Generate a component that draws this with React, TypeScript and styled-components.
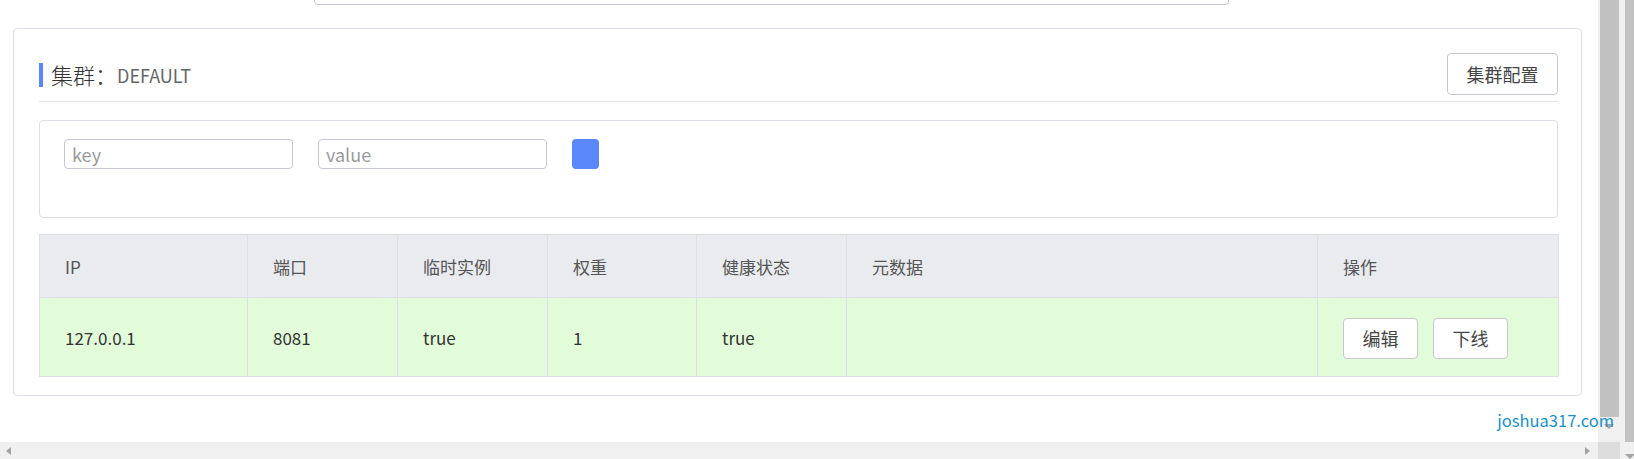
import React from "react";
import styled, { createGlobalStyle } from "styled-components";

const GlobalStyle = createGlobalStyle`
  html, body {
    margin: 0;
    padding: 0;
    background: #ffffff;
    overflow: hidden;
  }
  body {
    font-family: "Noto Sans CJK SC", "Noto Sans", sans-serif;
    color: #333;
  }
`;

type Column = { title: string; width: number };

const COLUMNS: Column[] = [
  { title: "IP", width: 208 },
  { title: "端口", width: 150 },
  { title: "临时实例", width: 150 },
  { title: "权重", width: 149 },
  { title: "健康状态", width: 150 },
  { title: "元数据", width: 471 },
  { title: "操作", width: 241 },
];

const ROWS = [{ ip: "127.0.0.1", port: "8081", ephemeral: "true", weight: "1", healthy: "true", metadata: "" }];

// 页面主体 + 模拟滚动条
export default function App() {
  return (
    <>
      <GlobalStyle />
      <Page>
        <MainColumn>
          <Content>
            <TopSearch />
            <ClusterCard>
              <CardHeader>
                <TitleWrap>
                  <TitleMark />
                  <Title>集群：</Title>
                  <ClusterName>DEFAULT</ClusterName>
                </TitleWrap>
                <Button size="large">集群配置</Button>
              </CardHeader>
              <FilterBox>
                <FilterInput placeholder="key" />
                <FilterInput placeholder="value" />
                <SearchButton />
              </FilterBox>
              <Table>
                <colgroup>
                  {COLUMNS.map((c) => (
                    <col key={c.title} style={{ width: c.width }} />
                  ))}
                </colgroup>
                <thead>
                  <tr>
                    {COLUMNS.map((c) => (
                      <Th key={c.title}>{c.title}</Th>
                    ))}
                  </tr>
                </thead>
                <tbody>
                  {ROWS.map((r) => (
                    <tr key={r.ip}>
                      <Td>{r.ip}</Td>
                      <Td>{r.port}</Td>
                      <Td>{r.ephemeral}</Td>
                      <Td>{r.weight}</Td>
                      <Td>{r.healthy}</Td>
                      <Td>{r.metadata}</Td>
                      <Td>
                        <Actions>
                          <Button size="small">编辑</Button>
                          <Button size="small">下线</Button>
                        </Actions>
                      </Td>
                    </tr>
                  ))}
                </tbody>
              </Table>
            </ClusterCard>
          </Content>
          <HScrollbar>
            <Arrow dir="left" />
            <Arrow dir="right" />
          </HScrollbar>
        </MainColumn>
        <VScrollbar>
          <VTrack>
            <Thumb />
            <Arrow dir="down" />
          </VTrack>
          <Corner />
        </VScrollbar>
        <ScrollGap />
        <OuterScrollbar>
          <OuterThumb />
          <OuterBottom>
            <Arrow dir="down" />
          </OuterBottom>
        </OuterScrollbar>
        <Watermark>joshua317.com</Watermark>
      </Page>
    </>
  );
}

const Page = styled.div`
  position: relative;
  display: flex;
  width: 1634px;
  height: 459px;
  overflow: hidden;
`;

const MainColumn = styled.div`
  flex: 1;
  display: flex;
  flex-direction: column;
  min-width: 0;
`;

const Content = styled.div`
  flex: 1;
  overflow: hidden;
`;

const TopSearch = styled.div`
  width: 915px;
  height: 30px;
  margin: -25px 0 0 314px;
  border: 1px solid #c8c6d2;
  border-radius: 4px;
  box-sizing: border-box;
`;

const ClusterCard = styled.div`
  margin: 23px 0 0 13px;
  width: 1569px;
  height: 368px;
  box-sizing: border-box;
  border: 1px solid #dcdfe6;
  border-radius: 4px;
  padding: 24px 23px 0 25px;
`;

const CardHeader = styled.div`
  display: flex;
  align-items: center;
  justify-content: space-between;
  padding-bottom: 6px;
  border-bottom: 1px solid #e4e7ed;
`;

const TitleWrap = styled.div`
  display: flex;
  align-items: center;
`;

const TitleMark = styled.div`
  width: 4px;
  height: 24px;
  margin-top: 1px;
  background: #5a87fb;
  margin-right: 8px;
`;

const Title = styled.span`
  font-size: 22px;
  font-weight: 300;
  color: #333;
  line-height: 28px;
`;

const ClusterName = styled.span`
  font-size: 18px;
  color: #666;
  line-height: 28px;
  margin-top: 2px;
`;

const Button = styled.button<{ size: "large" | "small" }>`
  font-family: "Noto Sans CJK SC", "Noto Sans", sans-serif;
  font-size: 18px;
  color: #444;
  background: #fff;
  border: 1px solid #c8c6d0;
  border-radius: 4px;
  padding: 0;
  width: ${(p) => (p.size === "large" ? "111px" : "75px")};
  height: ${(p) => (p.size === "large" ? "42px" : "41px")};
  cursor: pointer;
`;

const FilterBox = styled.div`
  margin-top: 18px;
  height: 98px;
  box-sizing: border-box;
  border: 1px solid #dcdfe6;
  border-radius: 4px;
  padding: 18px 24px 0 24px;
  display: flex;
  align-items: flex-start;
  gap: 25px;
`;

const FilterInput = styled.input`
  width: 229px;
  height: 30px;
  box-sizing: border-box;
  border: 1px solid #c8c6d2;
  border-radius: 4px;
  padding: 0 7px;
  font-family: "Noto Sans CJK SC", "Noto Sans", sans-serif;
  font-size: 18px;
  color: #333;
  outline: none;
  &::placeholder {
    color: #9a9a9a;
  }
`;

const SearchButton = styled.button`
  width: 27px;
  height: 30px;
  border: none;
  border-radius: 4px;
  background: #5a88fb;
  padding: 0;
`;

const Table = styled.table`
  margin-top: 16px;
  width: 1519px;
  border-collapse: collapse;
  table-layout: fixed;
  font-size: 17px;
`;

const Th = styled.th`
  height: 63px;
  box-sizing: border-box;
  background: #e9ebef;
  border: 1px solid #dcdfe6;
  text-align: left;
  font-weight: normal;
  color: #555;
  padding: 0 0 0 25px;
`;

const Td = styled.td`
  height: 79px;
  box-sizing: border-box;
  background: #e2fcda;
  border: 1px solid #dcdfe6;
  color: #333;
  padding: 0 0 0 25px;
`;

const Actions = styled.div`
  display: flex;
  gap: 15px;
  padding-top: 2px;
`;

const HScrollbar = styled.div`
  height: 17px;
  background: #f0f0f0;
  display: flex;
  align-items: center;
  justify-content: space-between;
  padding: 0 8px 0 6px;
`;

const Arrow = styled.span<{ dir: "left" | "right" | "down" }>`
  width: 0;
  height: 0;
  border-style: solid;
  border-color: transparent;
  ${(p) =>
    p.dir === "left"
      ? "border-width: 4px 5px 4px 0; border-right-color: #a3a3a3;"
      : p.dir === "right"
      ? "border-width: 4px 0 4px 5px; border-left-color: #a3a3a3;"
      : "border-width: 5px 5px 0 5px; border-top-color: #a3a3a3;"}
`;

const VScrollbar = styled.div`
  width: 22px;
  display: flex;
  flex-direction: column;
`;

const VTrack = styled.div`
  flex: 1;
  background: #f0f0f0;
  display: flex;
  flex-direction: column;
  align-items: center;
  gap: 7px;
`;

const Thumb = styled.div`
  align-self: stretch;
  margin: 0 1px 0 2px;
  height: 417px;
  background: #c1c1c1;
`;

const Corner = styled.div`
  height: 17px;
  background: #dcdcdc;
`;

const ScrollGap = styled.div`
  width: 5px;
  background: #f0f0f0;
`;

const OuterScrollbar = styled.div`
  width: 9px;
  display: flex;
  flex-direction: column;
`;

const OuterThumb = styled.div`
  height: 442px;
  background: #c1c1c1;
`;

const OuterBottom = styled.div`
  flex: 1;
  background: #f0f0f0;
  display: flex;
  justify-content: center;
  align-items: flex-end;
`;

const Watermark = styled.div`
  position: absolute;
  right: 20px;
  top: 408px;
  font-family: "Noto Sans CJK SC", "Noto Sans", sans-serif;
  font-size: 16.5px;
  color: #1a8fc8;
  line-height: 24px;
`;
